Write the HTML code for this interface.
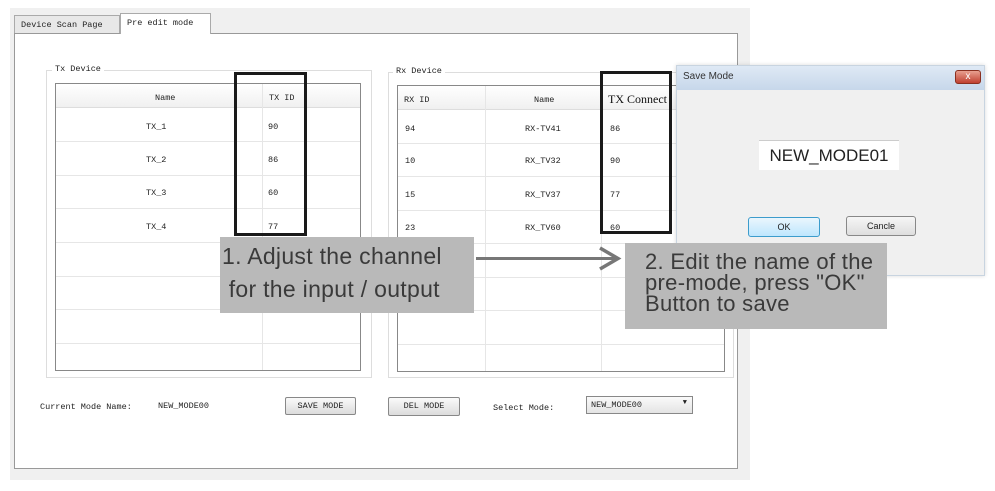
<!DOCTYPE html>
<html><head><style>
*{margin:0;padding:0;box-sizing:border-box}
body{width:995px;height:491px;background:#fff;position:relative;overflow:hidden;font-family:"Liberation Serif",serif;font-size:9px;color:#222}
.a{position:absolute}
.mono{font-family:"Liberation Mono",monospace;font-size:8.5px}
.cell{position:absolute;font-family:"Liberation Mono",monospace;font-size:8.5px}
.btn{position:absolute;border:1px solid #888;background:linear-gradient(#fafafa,#dcdcdc);border-radius:2px;font-family:"Liberation Mono",monospace;font-size:8.5px;text-align:center}
.call{position:absolute;background:#b9b9b9;color:#3a3a3a;font-family:"Liberation Sans",sans-serif;white-space:nowrap}
.hl{position:absolute;height:1px;background:#e6e6e6}
.vl{position:absolute;width:1px;background:#e6e6e6}
</style></head><body>
<div class="a" style="left:10px;top:8px;width:740px;height:472px;background:#f0f0f0"></div>
<div class="a mono" style="left:14px;top:15px;width:106px;height:19px;border:1px solid #aaa;background:#e8e8e8;padding:4px 6px">Device Scan Page</div>
<div class="a mono" style="left:120px;top:13px;width:91px;height:21px;border:1px solid #aaa;border-bottom:none;background:#fff;padding:4px 6px;z-index:2">Pre edit mode</div>
<div class="a" style="left:14px;top:33px;width:724px;height:436px;border:1px solid #999;background:#fff"></div>
<div class="a" style="left:46px;top:70px;width:326px;height:308px;border:1px solid #ddd"></div>
<div class="a mono" style="left:52px;top:64px;background:#fff;padding:0 3px">Tx Device</div>
<div class="a" style="left:55px;top:83px;width:306px;height:288px;border:1px solid #888;background:#fff"></div>
<div class="a" style="left:56px;top:84px;width:304px;height:24px;background:linear-gradient(#fff,#f0f0f0);border-bottom:1px solid #ddd"></div>
<div class="vl" style="left:262px;top:84px;height:286px"></div>
<div class="hl" style="left:56px;top:141px;width:304px"></div>
<div class="hl" style="left:56px;top:175px;width:304px"></div>
<div class="hl" style="left:56px;top:208px;width:304px"></div>
<div class="hl" style="left:56px;top:242px;width:304px"></div>
<div class="hl" style="left:56px;top:276px;width:304px"></div>
<div class="hl" style="left:56px;top:309px;width:304px"></div>
<div class="hl" style="left:56px;top:343px;width:304px"></div>
<div class="cell" style="left:155px;top:93px">Name</div>
<div class="cell" style="left:269px;top:93px">TX ID</div>
<div class="cell" style="left:146px;top:122px">TX_1</div><div class="cell" style="left:268px;top:122px">90</div>
<div class="cell" style="left:146px;top:155px">TX_2</div><div class="cell" style="left:268px;top:155px">86</div>
<div class="cell" style="left:146px;top:188px">TX_3</div><div class="cell" style="left:268px;top:188px">60</div>
<div class="cell" style="left:146px;top:222px">TX_4</div><div class="cell" style="left:268px;top:222px">77</div>
<div class="a" style="left:234px;top:72px;width:73px;height:164px;border:3px solid #1a1a1a"></div>
<div class="a" style="left:388px;top:72px;width:346px;height:306px;border:1px solid #ddd"></div>
<div class="a mono" style="left:393px;top:66px;background:#fff;padding:0 3px">Rx Device</div>
<div class="a" style="left:397px;top:85px;width:328px;height:287px;border:1px solid #888;background:#fff"></div>
<div class="a" style="left:398px;top:86px;width:326px;height:24px;background:linear-gradient(#fff,#f0f0f0);border-bottom:1px solid #ddd"></div>
<div class="vl" style="left:485px;top:86px;height:285px"></div>
<div class="vl" style="left:601px;top:86px;height:285px"></div>
<div class="hl" style="left:398px;top:143px;width:326px"></div>
<div class="hl" style="left:398px;top:176px;width:326px"></div>
<div class="hl" style="left:398px;top:210px;width:326px"></div>
<div class="hl" style="left:398px;top:243px;width:326px"></div>
<div class="hl" style="left:398px;top:277px;width:326px"></div>
<div class="hl" style="left:398px;top:310px;width:326px"></div>
<div class="hl" style="left:398px;top:344px;width:326px"></div>
<div class="cell" style="left:404px;top:95px">RX ID</div>
<div class="cell" style="left:534px;top:95px">Name</div>
<div class="a" style="left:608px;top:92px;font-family:'Liberation Serif',serif;font-size:12px;color:#111">TX Connect</div>
<div class="cell" style="left:405px;top:124px">94</div><div class="cell" style="left:525px;top:124px">RX-TV41</div><div class="cell" style="left:610px;top:124px">86</div>
<div class="cell" style="left:405px;top:156px">10</div><div class="cell" style="left:525px;top:156px">RX_TV32</div><div class="cell" style="left:610px;top:156px">90</div>
<div class="cell" style="left:405px;top:190px">15</div><div class="cell" style="left:525px;top:190px">RX_TV37</div><div class="cell" style="left:610px;top:190px">77</div>
<div class="cell" style="left:405px;top:223px">23</div><div class="cell" style="left:525px;top:223px">RX_TV60</div><div class="cell" style="left:610px;top:223px">60</div>
<div class="a" style="left:600px;top:71px;width:72px;height:163px;border:3px solid #1a1a1a"></div>
<div class="a" style="left:676px;top:65px;width:309px;height:211px;background:#f0f0f0;border:1px solid #c8d4e0;box-shadow:0 0 4px rgba(0,0,0,.15)"></div>
<div class="a" style="left:677px;top:66px;width:307px;height:24px;background:linear-gradient(#dfe9f5,#c7d7ea)"></div>
<div class="a" style="left:683px;top:71px;font-family:'Liberation Sans',sans-serif;font-size:10px;color:#333">Save Mode</div>
<div class="a" style="left:955px;top:70px;width:26px;height:14px;background:linear-gradient(#e8a090,#c04030);border:1px solid #8a3020;border-radius:3px;color:#fff;font-size:10px;text-align:center;line-height:12px;font-family:'Liberation Sans',sans-serif">x</div>
<div class="a" style="left:759px;top:140px;width:140px;height:30px;background:#fff;border-top:1px solid #ccc;font-family:'Liberation Sans',sans-serif;font-size:17px;text-align:center;line-height:30px;color:#222">NEW_MODE01</div>
<div class="a" style="left:748px;top:217px;width:72px;height:20px;border:1px solid #3c9ccc;border-radius:3px;background:linear-gradient(#eaf6fd,#bee6fd);font-family:'Liberation Sans',sans-serif;font-size:9px;text-align:center;line-height:18px">OK</div>
<div class="a" style="left:846px;top:216px;width:70px;height:20px;border:1px solid #888;border-radius:3px;background:linear-gradient(#f6f6f6,#dedede);font-family:'Liberation Sans',sans-serif;font-size:9px;text-align:center;line-height:18px">Cancle</div>
<div class="call" style="left:220px;top:237px;width:254px;height:76px;padding:3px 0 0 2px;font-size:23px;line-height:33px;letter-spacing:0.3px">1. Adjust the channel<br>&nbsp;for the input / output</div>
<div class="a" style="left:476px;top:257px;width:140px;height:3px;background:#777"></div>
<svg class="a" style="left:597px;top:245px" width="26" height="28"><path d="M3 3 L21 13.5 L3 24" stroke="#777" stroke-width="3.5" fill="none"/></svg>
<div class="call" style="left:625px;top:243px;width:262px;height:86px;padding:8px 0 0 20px;font-size:22px;line-height:21px;letter-spacing:0.3px">2. Edit the name of the<br>pre-mode, press "OK"<br>Button to save</div>
<div class="cell" style="left:40px;top:402px">Current Mode Name:</div>
<div class="cell" style="left:158px;top:401px">NEW_MODE00</div>
<div class="btn" style="left:285px;top:397px;width:71px;height:18px;line-height:16px">SAVE MODE</div>
<div class="btn" style="left:388px;top:397px;width:72px;height:19px;line-height:17px">DEL MODE</div>
<div class="cell" style="left:493px;top:403px">Select Mode:</div>
<div class="a mono" style="left:586px;top:396px;width:107px;height:18px;border:1px solid #888;background:linear-gradient(#fafafa,#e4e4e4);padding:3px 4px">NEW_MODE00<span style="position:absolute;right:5px;top:2px;font-size:7px">▼</span></div>
</body></html>
